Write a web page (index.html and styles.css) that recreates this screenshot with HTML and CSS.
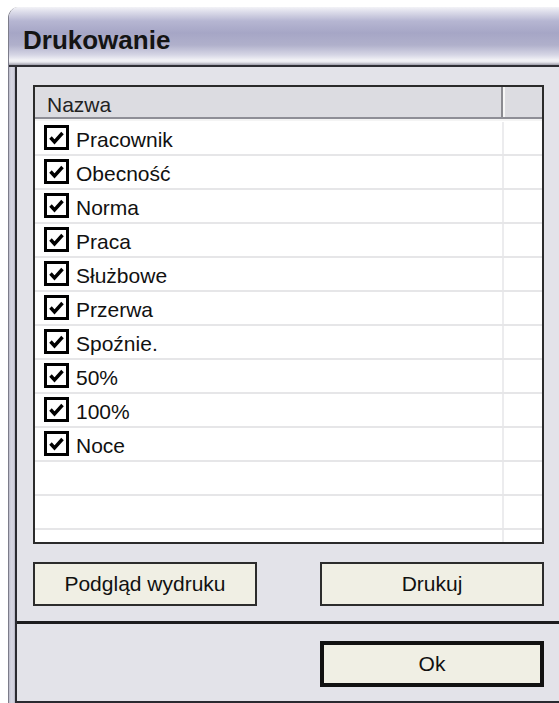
FILE: index.html
```html
<!DOCTYPE html>
<html lang="pl">
<head>
<meta charset="utf-8">
<title>Drukowanie</title>
<link rel="stylesheet" href="styles.css">
</head>
<body>
<div class="window">
  <div class="titlebar"><span class="title">Drukowanie</span></div>
  <div class="frame">
    <div class="client">
      <div class="upper">
        <div class="list">
          <div class="list-head">
            <div class="col-name">Nazwa</div>
            <div class="col-rest"></div>
          </div>
          <div class="list-body">
            <div class="row"><div class="cell"><svg class="cb" viewBox="0 0 25 25"><rect x="1.5" y="1.5" width="22" height="22" fill="#fff" stroke="#000" stroke-width="3"/><path d="M6.5 12.5 L10.5 17 L18.5 8" fill="none" stroke="#000" stroke-width="3.4"/></svg><span class="label">Pracownik</span></div><div class="cell-rest"></div></div>
            <div class="row"><div class="cell"><svg class="cb" viewBox="0 0 25 25"><rect x="1.5" y="1.5" width="22" height="22" fill="#fff" stroke="#000" stroke-width="3"/><path d="M6.5 12.5 L10.5 17 L18.5 8" fill="none" stroke="#000" stroke-width="3.4"/></svg><span class="label">Obecność</span></div><div class="cell-rest"></div></div>
            <div class="row"><div class="cell"><svg class="cb" viewBox="0 0 25 25"><rect x="1.5" y="1.5" width="22" height="22" fill="#fff" stroke="#000" stroke-width="3"/><path d="M6.5 12.5 L10.5 17 L18.5 8" fill="none" stroke="#000" stroke-width="3.4"/></svg><span class="label">Norma</span></div><div class="cell-rest"></div></div>
            <div class="row"><div class="cell"><svg class="cb" viewBox="0 0 25 25"><rect x="1.5" y="1.5" width="22" height="22" fill="#fff" stroke="#000" stroke-width="3"/><path d="M6.5 12.5 L10.5 17 L18.5 8" fill="none" stroke="#000" stroke-width="3.4"/></svg><span class="label">Praca</span></div><div class="cell-rest"></div></div>
            <div class="row"><div class="cell"><svg class="cb" viewBox="0 0 25 25"><rect x="1.5" y="1.5" width="22" height="22" fill="#fff" stroke="#000" stroke-width="3"/><path d="M6.5 12.5 L10.5 17 L18.5 8" fill="none" stroke="#000" stroke-width="3.4"/></svg><span class="label">Służbowe</span></div><div class="cell-rest"></div></div>
            <div class="row"><div class="cell"><svg class="cb" viewBox="0 0 25 25"><rect x="1.5" y="1.5" width="22" height="22" fill="#fff" stroke="#000" stroke-width="3"/><path d="M6.5 12.5 L10.5 17 L18.5 8" fill="none" stroke="#000" stroke-width="3.4"/></svg><span class="label">Przerwa</span></div><div class="cell-rest"></div></div>
            <div class="row"><div class="cell"><svg class="cb" viewBox="0 0 25 25"><rect x="1.5" y="1.5" width="22" height="22" fill="#fff" stroke="#000" stroke-width="3"/><path d="M6.5 12.5 L10.5 17 L18.5 8" fill="none" stroke="#000" stroke-width="3.4"/></svg><span class="label">Spoźnie.</span></div><div class="cell-rest"></div></div>
            <div class="row"><div class="cell"><svg class="cb" viewBox="0 0 25 25"><rect x="1.5" y="1.5" width="22" height="22" fill="#fff" stroke="#000" stroke-width="3"/><path d="M6.5 12.5 L10.5 17 L18.5 8" fill="none" stroke="#000" stroke-width="3.4"/></svg><span class="label">50%</span></div><div class="cell-rest"></div></div>
            <div class="row"><div class="cell"><svg class="cb" viewBox="0 0 25 25"><rect x="1.5" y="1.5" width="22" height="22" fill="#fff" stroke="#000" stroke-width="3"/><path d="M6.5 12.5 L10.5 17 L18.5 8" fill="none" stroke="#000" stroke-width="3.4"/></svg><span class="label">100%</span></div><div class="cell-rest"></div></div>
            <div class="row"><div class="cell"><svg class="cb" viewBox="0 0 25 25"><rect x="1.5" y="1.5" width="22" height="22" fill="#fff" stroke="#000" stroke-width="3"/><path d="M6.5 12.5 L10.5 17 L18.5 8" fill="none" stroke="#000" stroke-width="3.4"/></svg><span class="label">Noce</span></div><div class="cell-rest"></div></div>
            <div class="row"><div class="cell"></div><div class="cell-rest"></div></div>
            <div class="row"><div class="cell"></div><div class="cell-rest"></div></div>
            <div class="row"><div class="cell"></div><div class="cell-rest"></div></div>
          </div>
        </div>
        <div class="actions">
          <button class="btn">Podgląd wydruku</button>
          <button class="btn">Drukuj</button>
        </div>
      </div>
      <div class="sep"></div>
      <div class="lower">
        <button class="btn btn-default">Ok</button>
      </div>
    </div>
  </div>
</div>
</body>
</html>
```
FILE: styles.css
```css
html, body {
  margin: 0;
  padding: 0;
  background: #ffffff;
  overflow: hidden;
}

body {
  font-family: "Liberation Sans", Arial, sans-serif;
  color: #111;
}

.window {
  margin: 7px 0 0 8px;
  height: 696px;
  display: flex;
  flex-direction: column;
  border-left: 1px solid #7c7c8a;
  border-top-left-radius: 11px;
  overflow: hidden;
}

/* title bar with the lavender sheen */
.titlebar {
  height: 58px;
  flex: none;
  border-bottom: 2px solid #2e2e34;
  background: linear-gradient(to bottom,
    #f3f3f7 0px,
    #e0e0ec 4px,
    #b6b6d2 14px,
    #a6a6c6 26px,
    #b0b0cb 38px,
    #d6d6e5 48px,
    #f2f2f6 53px,
    #eaeaf0 55px,
    #9d9daa 58px);
  box-sizing: content-box;
}

.title {
  display: block;
  padding: 18px 0 0 14px;
  font-size: 26px;
  line-height: 30px;
  font-weight: bold;
  color: #141414;
}

.frame {
  flex: 1;
  display: flex;
  padding-left: 6px;
  background: linear-gradient(to right, #b9b9c8 0, #d6d6e2 2px, #cfcfdc 5px, #a9a9b8 6px);
}

.client {
  flex: 1;
  display: flex;
  flex-direction: column;
  background: #e3e3e9;
  border-left: 2px solid #2a2a30;
  border-bottom: 2px solid #2a2a30;
}

.upper {
  padding: 18px 15px 15px 16px;
}

/* list view */
.list {
  height: 459px;
  box-sizing: border-box;
  border: 2px solid #2b2b2b;
  background: #ffffff;
  display: flex;
  flex-direction: column;
  overflow: hidden;
}

.list-head {
  flex: none;
  display: flex;
  height: 30px;
  background: #dcdce1;
  border-bottom: 2px solid #8e8e96;
  box-shadow: 0 2px 0 #f4f4f4;
}

.col-name {
  width: 468px;
  padding: 5px 0 0 12px;
  box-sizing: border-box;
  font-size: 21px;
  line-height: 25px;
  color: #222;
  border-right: 2px solid #8a8a90;
}

.col-rest {
  flex: 1;
  border-left: 2px solid #f6f6f6;
}

.list-body {
  flex: 1;
  padding-top: 3px;
}

.row {
  display: flex;
  height: 32px;
  border-bottom: 2px solid #e6e6e8;
}

.cell {
  width: 469px;
  display: flex;
  align-items: flex-start;
  padding-left: 9px;
  box-sizing: border-box;
  border-right: 2px solid #ececee;
}

.cell-rest {
  flex: 1;
}

.cb {
  width: 25px;
  height: 25px;
  margin-top: 3px;
  flex: none;
}

.label {
  margin: 6px 0 0 7px;
  font-size: 21px;
  line-height: 24px;
  color: #111;
}

/* buttons */
.actions {
  display: flex;
  justify-content: space-between;
  margin-top: 18px;
}

.btn {
  width: 224px;
  height: 44px;
  box-sizing: border-box;
  border: 2px solid #2c2c2c;
  background: #f0efe4;
  font-family: "Liberation Sans", Arial, sans-serif;
  font-size: 21px;
  color: #111;
  padding: 0;
  display: flex;
  align-items: center;
  justify-content: center;
}

.sep {
  flex: none;
  height: 3px;
  background: #1c1c1e;
}

.lower {
  flex: 1;
  display: flex;
  justify-content: flex-end;
  align-items: flex-start;
  padding: 17px 15px 0 16px;
}

.btn-default {
  height: 46px;
  border: 4px solid #111;
}
```
